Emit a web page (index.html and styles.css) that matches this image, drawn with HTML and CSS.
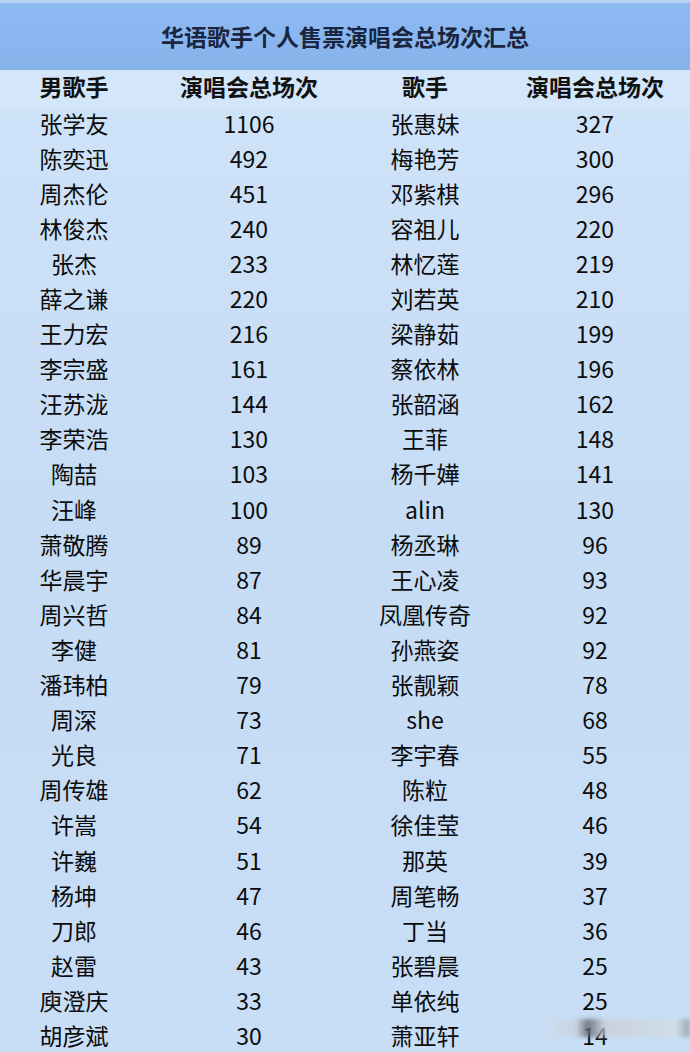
FILE: index.html
```html
<!DOCTYPE html>
<html lang="zh">
<head>
<meta charset="utf-8">
<link rel="stylesheet" href="styles.css">
</head>
<body>
<div class="page">
  <div class="title">华语歌手个人售票演唱会总场次汇总</div>
  <div class="table">
    <div class="row head"><span>男歌手</span><span>演唱会总场次</span><span>歌手</span><span>演唱会总场次</span></div>
    <div class="row"><span>张学友</span><span>1106</span><span>张惠妹</span><span>327</span></div>
    <div class="row"><span>陈奕迅</span><span>492</span><span>梅艳芳</span><span>300</span></div>
    <div class="row"><span>周杰伦</span><span>451</span><span>邓紫棋</span><span>296</span></div>
    <div class="row"><span>林俊杰</span><span>240</span><span>容祖儿</span><span>220</span></div>
    <div class="row"><span>张杰</span><span>233</span><span>林忆莲</span><span>219</span></div>
    <div class="row"><span>薛之谦</span><span>220</span><span>刘若英</span><span>210</span></div>
    <div class="row"><span>王力宏</span><span>216</span><span>梁静茹</span><span>199</span></div>
    <div class="row"><span>李宗盛</span><span>161</span><span>蔡依林</span><span>196</span></div>
    <div class="row"><span>汪苏泷</span><span>144</span><span>张韶涵</span><span>162</span></div>
    <div class="row"><span>李荣浩</span><span>130</span><span>王菲</span><span>148</span></div>
    <div class="row"><span>陶喆</span><span>103</span><span>杨千嬅</span><span>141</span></div>
    <div class="row"><span>汪峰</span><span>100</span><span>alin</span><span>130</span></div>
    <div class="row"><span>萧敬腾</span><span>89</span><span>杨丞琳</span><span>96</span></div>
    <div class="row"><span>华晨宇</span><span>87</span><span>王心凌</span><span>93</span></div>
    <div class="row"><span>周兴哲</span><span>84</span><span>凤凰传奇</span><span>92</span></div>
    <div class="row"><span>李健</span><span>81</span><span>孙燕姿</span><span>92</span></div>
    <div class="row"><span>潘玮柏</span><span>79</span><span>张靓颖</span><span>78</span></div>
    <div class="row"><span>周深</span><span>73</span><span>she</span><span>68</span></div>
    <div class="row"><span>光良</span><span>71</span><span>李宇春</span><span>55</span></div>
    <div class="row"><span>周传雄</span><span>62</span><span>陈粒</span><span>48</span></div>
    <div class="row"><span>许嵩</span><span>54</span><span>徐佳莹</span><span>46</span></div>
    <div class="row"><span>许巍</span><span>51</span><span>那英</span><span>39</span></div>
    <div class="row"><span>杨坤</span><span>47</span><span>周笔畅</span><span>37</span></div>
    <div class="row"><span>刀郎</span><span>46</span><span>丁当</span><span>36</span></div>
    <div class="row"><span>赵雷</span><span>43</span><span>张碧晨</span><span>25</span></div>
    <div class="row"><span>庾澄庆</span><span>33</span><span>单依纯</span><span>25</span></div>
    <div class="row"><span>胡彦斌</span><span>30</span><span>萧亚轩</span><span>14</span></div>
  </div>
  <div class="watermark"></div>
</div>
</body>
</html>
```
FILE: styles.css
```css
html, body {
  margin: 0;
  padding: 0;
}
body {
  width: 690px;
  height: 1052px;
  overflow: hidden;
  font-family: "Noto Sans CJK SC", "Noto Sans", sans-serif;
  color: #0c0c0c;
}
.page {
  position: relative;
  width: 690px;
  height: 1052px;
  background: linear-gradient(180deg, #d0e4f9 0%, #c6dcf5 50%, #c8def6 100%);
}
.title {
  height: 70px;
  box-sizing: border-box;
  border-top: 3px solid #b7d3f1;
  border-bottom: 1px solid #7eaee4;
  background: linear-gradient(180deg, #8dbaf2 0%, #89b6ee 60%, #87b3eb 100%);
  display: flex;
  align-items: center;
  justify-content: center;
  font-size: 23px;
  font-weight: 700;
  color: #1a2640;
}
.table {
  display: flex;
  flex-direction: column;
}
.row {
  display: grid;
  grid-template-columns: 148px 202px 150px 190px;
  height: 35.1px;
  flex: none;
  box-sizing: border-box;
  padding-bottom: 3px;
  align-items: center;
  font-size: 23px;
  font-weight: 400;
  line-height: 1;
}
.row span {
  text-align: center;
  white-space: nowrap;
}
.row.head {
  height: 37px;
  padding-bottom: 5px;
  font-weight: 700;
  color: #111;
  background: #d3e6fa;
}
.watermark {
  position: absolute;
  left: 548px;
  top: 1019px;
  width: 142px;
  height: 18px;
  background: linear-gradient(90deg, rgba(220,225,232,0.2) 0%, rgba(200,205,212,0.7) 20%, rgba(90,95,105,0.8) 28%, rgba(200,205,212,0.7) 40%, rgba(215,220,226,0.6) 90%, rgba(120,125,135,0.6) 100%);
  filter: blur(2px);
}
```
